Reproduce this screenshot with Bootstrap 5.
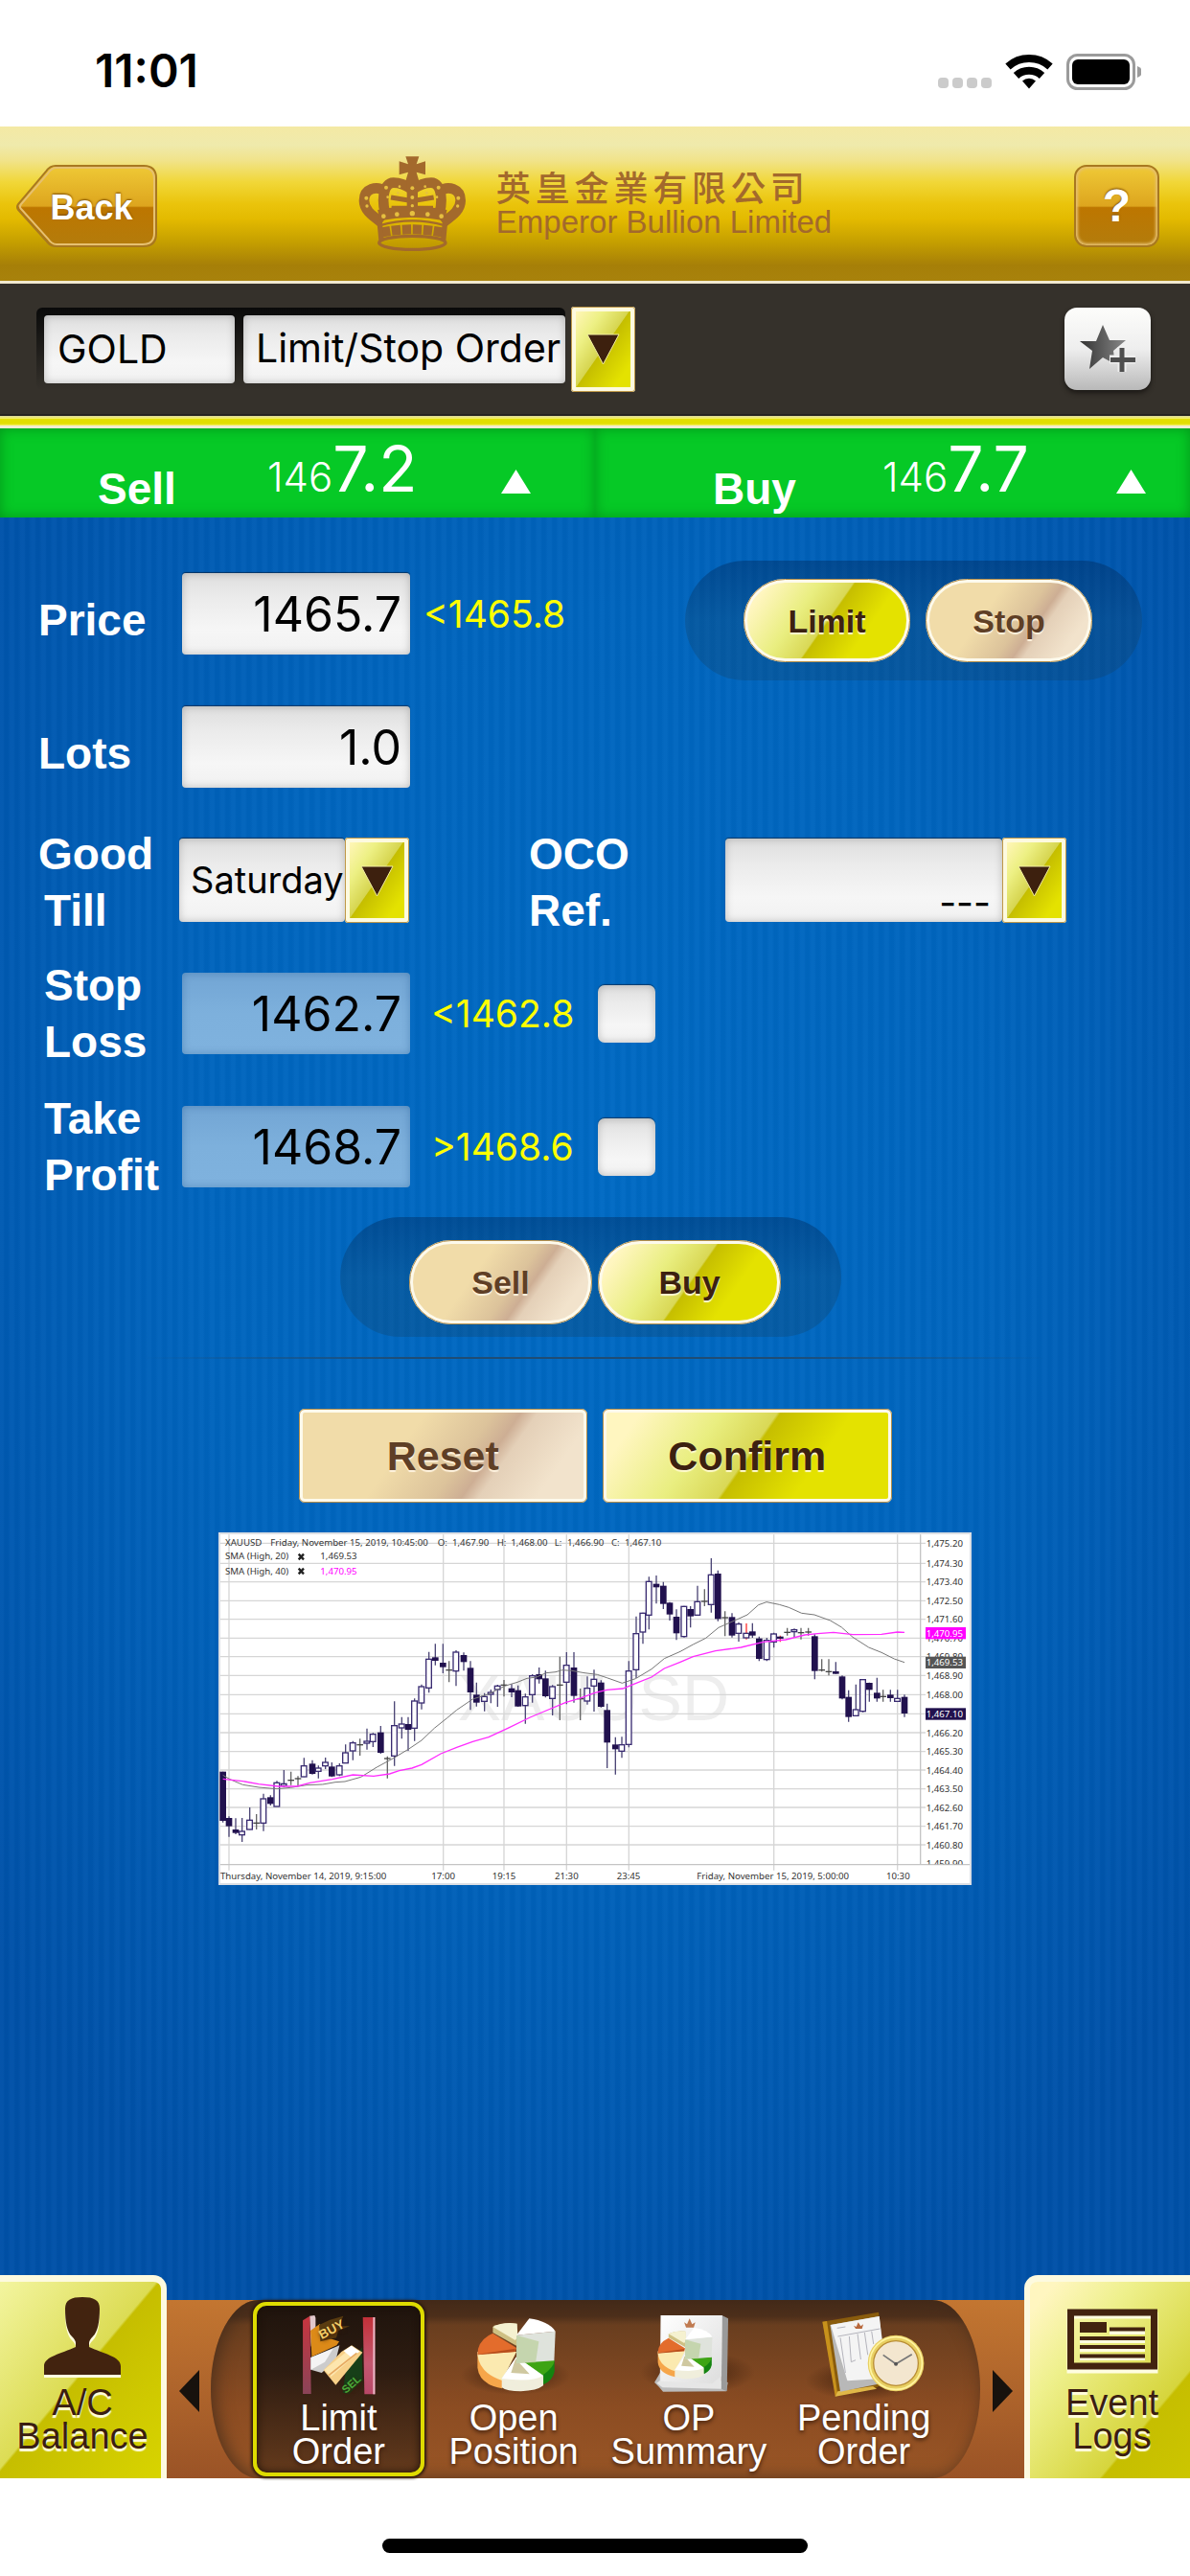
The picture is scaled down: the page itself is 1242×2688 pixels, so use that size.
<!DOCTYPE html>
<html lang="en">
<head>
<meta charset="utf-8">
<meta name="viewport" content="width=device-width, initial-scale=1">
<title>Emperor Bullion Limited - Limit Order</title>
<link href="https://cdn.jsdelivr.net/npm/bootstrap@5.3.0/dist/css/bootstrap.min.css" rel="stylesheet">
<style>
  :root { --arial: "Liberation Sans", Arial, sans-serif; --ui: Inter, "Liberation Sans", sans-serif; }
  body { font-family: var(--ui); background: #fff; color: #000; }
  .screen { min-height: 100vh; }
  svg { display: block; flex: none; }

  .status-bar { height: 132px; padding: 0 51px 0 99px; }
  .clock { font-size: 48px; font-weight: 600; line-height: 56px; margin-top: 46px; }
  .status-icons { margin-top: 54px; }

  .brand-bar { height: 164px; padding: 0 16px; display: grid; grid-template-columns: 1fr auto 1fr; align-items: center;
    background: linear-gradient(#f4e9a4 0, #efeaac 12%, #f1e38a 22%, #f1d738 36%, #eac40c 50%, #e3ba00 60%, #c59f00 75%, #a67f08 90%, #a8820c 100%);
    border-bottom: 3px solid #f2ead0; }
  .gold-btn { border: 0; padding: 0; margin-top: 4px; color: #fff; font-family: var(--arial); font-weight: 700; text-shadow: 0 -1px 2px #7a4a00; }
  .help-btn { width: 89px; height: 86px; margin-right: 16px; font-size: 48px; border: 2px solid #a87820; border-radius: 13px; box-shadow: inset 0 0 3px 2px #e6c070;
    background: linear-gradient(#efc936 0, #dda51e 50%, #bd7600 52%, #b37c0c 100%); }
  .back-btn { width: 149px; height: 88px; font-size: 36px; background: none; }
  .back-label { line-height: 92px; padding-left: 10px; }
  .brand-zh { width: 322px; font-family: "Noto Sans CJK TC", sans-serif; font-size: 36px; line-height: 38px; font-weight: 500; text-align: justify; text-align-last: justify; color: #a3692c; }
  .brand-en { font-family: var(--arial); font-size: 33px; line-height: 38px; color: #a3692c; }

  .product-bar { height: 138px; padding: 0 41px 0 38px; background: #35312b; border-bottom: 2px solid #26231f; }
  .combo { padding: 7px 0 7px 8px; background: linear-gradient(#0a0a0a, #35312b); border-radius: 6px; height: 86px; gap: 9px; }
  .field { border: 0; border-radius: 4px; color: #000; background: linear-gradient(#dedede 0, #ebebeb 30%, #f6f6f6 70%, #f1f1f1 100%);
    box-shadow: inset 0 0 8px rgba(0,0,0,.22), 0 -1px 1px rgba(0,0,0,.45); outline: 0; appearance: none; min-width: 0; }
  .field-product { width: 199px; height: 71px; font-size: 41px; padding: 0 14px; }
  .field-type { width: 336px; height: 71px; font-size: 41px; padding: 0 0 0 13px; }
  .drop-btn { width: 67px; height: 89px; padding: 0; border: 5px solid #fdfadf; outline: 1px solid #c09848; outline-offset: -1px; border-radius: 3px;
    background: linear-gradient(125deg, #fff6b8 0, #edf084 25%, #d6d550 49%, #c5be00 50%, #e4e200 85%); }
  .drop-order { margin-left: 6px; }
  .star-btn { width: 90px; height: 86px; padding: 0; border: 0; border-radius: 13px; background: linear-gradient(#fdfdfb, #eee 50%, #b9b9b9); box-shadow: 0 3px 5px #1b1815; }
  .yellow-rule { height: 13px; background: linear-gradient(#d9d6a0 0, #f4f060 20%, #e2de00 28%, #e2de00 62%, #f4f060 75%, #f2ecd0 80%); }

  .quote { height: 93px; color: #fff; background: #06c926; box-shadow: inset 0 0 14px #03961a; }
  .quote-sell { padding-left: 102px; }
  .quote-buy { padding-left: 123px; }
  .quote-name { width: 177px; margin-top: 36px; font-family: var(--arial); font-weight: 700; font-size: 46px; line-height: 54px; }
  .quote-price { width: 244px; margin-top: 3px; font-weight: 400; font-size: 66px; line-height: 78px; }
  .quote-lead { font-size: 42px; font-weight: 300; }
  .quote-up { margin-top: 43px; }

  .ticket { flex: 1 0 auto; padding-top: 31px; padding-bottom: 60px;
    background: repeating-linear-gradient(90deg, rgba(255,255,255,.02) 0 3px, rgba(0,0,0,.025) 5px 8px, rgba(255,255,255,.02) 11px),
      radial-gradient(ellipse 66% 66% at 50% 38%, #006ac4 0, #0065be 50%, #0051a8 100%); }
  .ticket-row { height: 139px; padding-left: 40px; }
  .name-cell { width: 150px; font-family: var(--arial); font-weight: 700; font-size: 46px; line-height: 59px; color: #fff; }
  .name-single { padding-top: 13px; }
  .name-double { padding-top: 4px; }
  .name-inset { padding-left: 6px; }
  .name-indent { padding-left: 6px; }
  .name-oco { width: 205px; margin-left: 125px; }
  .num-field { width: 238px; height: 85px; font-size: 50px; text-align: right; padding: 0 9px; }
  .num-field:disabled { background: linear-gradient(#72a5d4, #7db0dc 50%, #7fb2de); opacity: 1; color: #000; box-shadow: inset 0 0 8px rgba(0,60,120,.3); }
  .limit-hint { width: 174px; color: #ff0; font-size: 39px; line-height: 46px; }
  .hint-near { margin-left: 14px; }
  .hint-far { margin-left: 22px; }
  .till-field { width: 173px; height: 87px; margin-left: -3px; padding: 0 0 0 12px; font-size: 38px; }
  .oco-field { width: 289px; height: 87px; padding: 38px 12px 0 0; font-size: 39px; text-align: right; text-align-last: right; }
  .tick { width: 60px; height: 60px; border-radius: 7px; }

  .pill-tray { height: 125px; border-radius: 63px; background: linear-gradient(rgba(0,40,90,.42), rgba(20,60,90,.27) 50%); }
  .tray-kind { width: 477px; margin-right: 50px; padding: 19px 52px 19px 61px; gap: 16px; }
  .tray-side { width: 523px; margin: 4px calc(50% - 257px) 0 auto; padding: 24px 63px 13px 72px; gap: 6px; }
  .glossy { flex: 1 1 0; padding: 0; font-family: var(--arial); font-weight: 700; border: 4px solid #fdfaec; outline: 1px solid #b58f4a; outline-offset: -1px; }
  .glossy-on { color: #3c2110; text-shadow: 0 2px 1px #fffbd0; background: linear-gradient(125deg, #fff6c0 10%, #e9ee80 34%, #d9d856 50%, #c6be00 51%, #e4e200 72%); }
  .glossy-off { color: #5f3f26; text-shadow: 0 2px 1px #fff4e0; background: linear-gradient(125deg, #f1dca9 36%, #dcc39b 56%, #cdae94 64%, #e4d0b8 69%, #f2e3cc 86%); }
  .glossy-round { border-radius: 44px; font-size: 34px; line-height: 78px; }
  .glossy-square { border-radius: 6px; font-size: 43px; line-height: 90px; height: 98px; }
  .fade-rule { height: 2px; margin: 21px 148px 52px; background: linear-gradient(90deg, transparent, #1f4c74 30%, #1f4c74 70%, transparent); }
  .action-row { width: 619px; margin: 0 auto 31px; gap: 16px; }
  .chart-box { width: 786px; max-width: 100%; margin: 0 auto; background: #fff; }
  .chart-box text { font-family: "Noto Sans", sans-serif; }

  .dock { margin-top: -26px; position: relative; }
  .dock-card { height: 212px; border: 0; font-family: var(--arial); font-size: 38px; line-height: 35px; text-align: center; text-decoration: none; color: #3a1d12; text-shadow: 0 3px 1px #fffde0; }
  .dock-left { width: 174px; border-top: 7px solid #fdfadf; border-right: 6px solid #fdfadf; border-radius: 0 14px 0 0; padding: 16px 0 0 4px;
    background: linear-gradient(130deg, #f3f5a0 0, #dcdc54 48%, #c6be00 49%, #d8d400 100%); }
  .dock-right { width: 173px; border-top: 7px solid #fdfadf; border-left: 6px solid #fdfadf; border-radius: 14px 0 0 0; padding: 16px 0 0 4px;
    background: linear-gradient(130deg, #fff6c0 8%, #eef08c 32%, #d6d53c 72%, #c6be00 73%, #ccc600 100%); }
  .dock-bar { height: 186px; background: linear-gradient(#c37631, #9a5326); }
  .dock-arrow { width: 46px; border: 0; padding: 0; background: none; }
  .dock-arrow svg { margin: 4px auto 0; }
  .dock-track { padding: 0 30px 0 42px; border-radius: 50px / 93px; background: linear-gradient(#472b19 0, #4d2f1b 9%, #693e1f 14%, #8b4c22 60%, #9a5626 100%); box-shadow: inset 4px 0 18px rgba(60,40,25,.75); }
  .dock-link { flex: 1 1 0; min-width: 0; margin: 2px; border: 4px solid transparent; border-radius: 14px; font-family: var(--arial); font-size: 38px; line-height: 35px; text-align: center; color: #fff; text-decoration: none; text-shadow: 0 2px 4px #3a1d0c; }
  .dock-link svg { width: 100%; margin: -2px 0 0; overflow: visible; }
  .dock-frame { border-color: #dedb00; background: linear-gradient(#1f140d, #2e1c11 40%, #643a1c); box-shadow: inset 0 0 8px #1a0f08, 0 0 3px 2px #2b1a0e; }
  .home-area { height: 102px; padding-top: 63px; }
  .home-line { width: 444px; height: 15px; border-radius: 8px; background: #000; }
</style>
<script src="https://cdn.jsdelivr.net/npm/bootstrap@5.3.0/dist/js/bootstrap.bundle.min.js"></script>
</head>
<body>
<div class="screen d-flex flex-column">

  <div class="status-bar d-flex justify-content-between align-items-start">
    <div class="clock">11:01</div>
    <svg class="status-icons" width="214" height="40" viewBox="0 0 214 40" aria-hidden="true">
      <g fill="#cbcbcb"><rect x="2" y="27" width="11" height="11" rx="4"/><rect x="17" y="27" width="11" height="11" rx="4"/><rect x="32" y="27" width="11" height="11" rx="4"/><rect x="47" y="27" width="11" height="11" rx="4"/></g>
      <g fill="none" stroke="#000" stroke-width="8"><path d="M75 15.500a33 33 0 0 1 44 0"/><path d="M83.500 25a20 20 0 0 1 27 0"/></g>
      <path d="M97 38.500l-7-8a10 10 0 0 1 14 0z"/>
      <rect x="137.500" y="3.500" width="69" height="35" rx="10" fill="#fff" stroke="#9b9b9b" stroke-width="3"/>
      <rect x="142" y="8" width="60" height="26" rx="6"/><path d="M210 15q5 2 5 6t-5 6z" fill="#9b9b9b"/>
    </svg>
  </div>

  <header class="brand-bar">
    <button type="button" class="gold-btn back-btn position-relative">
      <svg class="position-absolute top-0 start-0" width="149" height="88" viewBox="0 0 149 88" aria-hidden="true">
        <defs><linearGradient id="amber" x2="0" y2="1"><stop stop-color="#efc936"/><stop offset=".5" stop-color="#dda51e"/><stop offset=".52" stop-color="#bd7600"/><stop offset="1" stop-color="#b37c0c"/></linearGradient></defs>
        <path d="M42 2h92q13 0 13 13v58q0 13-13 13H42q-6 0-10-6L3 48q-2-3 0-6L32 8q4-6 10-6z" fill="url(#amber)" stroke="#a87820" stroke-width="2"/>
        <path d="M43 4h90q12 0 12 12v56q0 12-12 12H43q-5 0-9-6L6 47q-2-2 0-5L34 10q4-6 9-6z" fill="none" stroke="#e6c070" stroke-width="2"/>
      </svg>
      <span class="back-label position-relative">Back</span>
    </button>
    <div class="d-flex align-items-center">
      <svg width="112" height="100" viewBox="26 28 336 298" aria-hidden="true">
        <g fill="none" stroke="#a3692c">
          <path d="M100 236C68 212 44 196 44 166c0-38 40-48 64-30" stroke-width="32"/>
          <path d="M290 236c32-24 56-40 56-70 0-38-40-48-64-30" stroke-width="32"/>
          <path d="M116 222c-20-50-14-112 20-112 26 0 40 8 56 20" stroke-width="32"/>
          <path d="M274 222c20-50 14-112-20-112-26 0-40 8-56 20" stroke-width="32"/>
          <path d="M195 100v118" stroke-width="34"/>
          <path d="M90 212q105-22 210 0" stroke-width="34"/>
          <path d="M92 244q103-30 206 0" stroke-width="7"/>
          <path d="M98 266q97-20 194 0" stroke-width="30" stroke-dasharray="28 5"/>
          <ellipse cx="195" cy="298" rx="104" ry="21" stroke-width="10"/>
          <path d="M92 228l6 62M298 228l-6 62" stroke-width="16"/>
          <path d="M128 156q34 6 60 10M262 156q-34 6-60 10M130 190h130" stroke-width="15"/>
        </g>
        <path d="M174 28h42l-8 24 28-9v42l-28-8 8 28h-42l8-28-28 8V43l28 9z" fill="#a3692c"/>
        <g fill="#e6c040"><circle cx="195" cy="127" r="6"/><circle cx="195" cy="156" r="6"/><circle cx="195" cy="182" r="5"/><circle cx="195" cy="206" r="8"/><circle cx="147" cy="209" r="7"/><circle cx="243" cy="209" r="7"/><circle cx="105" cy="215" r="7"/><circle cx="286" cy="215" r="7"/><circle cx="51" cy="158" r="6"/><circle cx="339" cy="158" r="6"/><circle cx="53" cy="183" r="5"/><circle cx="337" cy="183" r="5"/><circle cx="113" cy="125" r="6"/><circle cx="277" cy="125" r="6"/><circle cx="118" cy="155" r="4"/><circle cx="272" cy="155" r="4"/><circle cx="150" cy="142" r="4"/><circle cx="240" cy="142" r="4"/><circle cx="155" cy="122" r="4"/><circle cx="235" cy="122" r="4"/></g>
      </svg>
      <div class="ms-4 ps-2">
        <div class="brand-zh" lang="zh-Hant">英皇金業有限公司</div>
        <div class="brand-en">Emperor Bullion Limited</div>
      </div>
    </div>
    <button type="button" class="gold-btn help-btn ms-auto" aria-label="Help">?</button>
  </header>

  <div class="product-bar d-flex justify-content-between align-items-center">
    <div class="d-flex align-items-center">
      <div class="combo d-flex align-items-center">
        <input class="field field-product" type="text" value="GOLD" aria-label="Product">
        <select class="field field-type" aria-label="Order type"><option>Limit/Stop Order</option></select>
      </div>
      <button type="button" class="drop-btn drop-order" aria-label="Choose order type"><svg class="mx-auto" width="35" height="34" viewBox="0 0 35 34"><path d="M1 2h33L17.500 33z" fill="#3d200e" stroke="#f2eea0" stroke-width="1"/></svg></button>
    </div>
    <button type="button" class="star-btn" aria-label="Add to favourites">
      <svg class="mx-auto" width="62" height="52" viewBox="0 0 62 52"><defs><linearGradient id="steel" x2="1" y2="0"><stop stop-color="#333"/><stop offset="1" stop-color="#888"/></linearGradient></defs>
        <path d="M26 1l7 16h17L37 28l1 8-3 4-9-5-14 12 3-19L2 18h17z" fill="url(#steel)"/><path d="M46 24v26M33 37h27" stroke="#eee" stroke-width="9"/><path d="M46 25v25M34 37.500h26" stroke="#4e4e4e" stroke-width="5"/></svg>
    </button>
  </div>
  <div class="yellow-rule"></div>

  <div class="row g-0">
    <div class="col-6 quote quote-sell d-flex align-items-start">
      <div class="quote-name">Sell</div>
      <div class="quote-price"><span class="quote-lead">146</span>7.2</div>
      <svg class="quote-up" width="31" height="25" viewBox="0 0 31 25" aria-label="up"><path d="M15.500 0L31 25H0z" fill="#fff"/></svg>
    </div>
    <div class="col-6 quote quote-buy d-flex align-items-start">
      <div class="quote-name">Buy</div>
      <div class="quote-price"><span class="quote-lead">146</span>7.7</div>
      <svg class="quote-up" width="31" height="25" viewBox="0 0 31 25" aria-label="up"><path d="M15.500 0L31 25H0z" fill="#fff"/></svg>
    </div>
  </div>

  <main class="ticket">
    <div class="ticket-row d-flex align-items-center">
      <label class="name-cell name-single" for="price">Price</label>
      <input class="field num-field" id="price" type="text" value="1465.7">
      <span class="limit-hint hint-near">&lt;1465.8</span>
      <div class="pill-tray tray-kind d-flex ms-auto align-self-end">
        <button type="button" class="glossy glossy-round glossy-on">Limit</button>
        <button type="button" class="glossy glossy-round glossy-off">Stop</button>
      </div>
    </div>
    <div class="ticket-row d-flex align-items-center">
      <label class="name-cell name-single" for="lots">Lots</label>
      <input class="field num-field" id="lots" type="text" value="1.0">
    </div>
    <div class="ticket-row d-flex align-items-center">
      <label class="name-cell name-double" for="till">Good<br><span class="name-indent">Till</span></label>
      <select class="field till-field" id="till"><option>Saturday</option></select>
      <button type="button" class="drop-btn" aria-label="Choose good till"><svg class="mx-auto" width="35" height="34" viewBox="0 0 35 34"><path d="M1 2h33L17.500 33z" fill="#3d200e" stroke="#f2eea0" stroke-width="1"/></svg></button>
      <label class="name-cell name-double name-oco" for="oco">OCO<br>Ref.</label>
      <select class="field oco-field" id="oco"><option>---</option></select>
      <button type="button" class="drop-btn" aria-label="Choose OCO reference"><svg class="mx-auto" width="35" height="34" viewBox="0 0 35 34"><path d="M1 2h33L17.500 33z" fill="#3d200e" stroke="#f2eea0" stroke-width="1"/></svg></button>
    </div>
    <div class="ticket-row d-flex align-items-center">
      <label class="name-cell name-inset" for="stoploss">Stop<br>Loss</label>
      <input class="field num-field" id="stoploss" type="text" value="1462.7" disabled>
      <span class="limit-hint hint-far">&lt;1462.8</span>
      <input class="field tick" type="checkbox" aria-label="Use stop loss">
    </div>
    <div class="ticket-row d-flex align-items-center">
      <label class="name-cell name-inset" for="takeprofit">Take<br>Profit</label>
      <input class="field num-field" id="takeprofit" type="text" value="1468.7" disabled>
      <span class="limit-hint hint-far">&gt;1468.6</span>
      <input class="field tick" type="checkbox" aria-label="Use take profit">
    </div>

    <div class="pill-tray tray-side d-flex">
      <button type="button" class="glossy glossy-round glossy-off">Sell</button>
      <button type="button" class="glossy glossy-round glossy-on">Buy</button>
    </div>
    <div class="fade-rule"></div>
    <div class="action-row d-flex">
      <button type="button" class="glossy glossy-square glossy-off">Reset</button>
      <button type="button" class="glossy glossy-square glossy-on">Confirm</button>
    </div>

    <div class="chart-box">
      <svg id="chart" class="w-100" viewBox="24 27 2358 1104" role="img" aria-label="XAUUSD candle chart"></svg>
    </div>
  </main>

  <nav class="dock d-flex align-items-end">
    <a href="#" class="dock-card dock-left">
      <svg class="mx-auto" width="80" height="93" viewBox="0 0 80 93" aria-hidden="true">
        <path d="M40 4c12 0 18 3 18 12 0 14-2 24-7 29-3 3-4 5-4 7l2 3c15 7 31 9 31 20v9H0v-9c0-11 16-13 31-20l2-3c0-2-1-4-4-7-5-5-7-15-7-29C22 7 28 4 40 4z" fill="#fffde0"/>
        <path d="M40 0c12 0 18 3 18 12 0 14-2 24-7 29-3 3-4 5-4 7v4c15 7 33 10 33 20v9H0v-9c0-10 18-13 33-20v-4c0-2-1-4-4-7-5-5-7-15-7-29C22 3 28 0 40 0z" fill="#42230f"/>
      </svg>
      A/C<br>Balance
    </a>
    <div class="dock-bar flex-fill d-flex">
      <button type="button" class="dock-arrow" aria-label="Previous"><svg width="21" height="44" viewBox="0 0 21 44"><path d="M21 0v44L0 22z" fill="#17120d"/></svg></button>
      <div class="dock-track flex-fill d-flex">
        <a href="#" class="dock-link dock-frame">
          <svg width="120" height="102" viewBox="9 0 360 306" aria-hidden="true">
            <defs><linearGradient id="post" x2="0" y2="1"><stop stop-color="#c8353f"/><stop offset="1" stop-color="#8a4458"/></linearGradient>
            <linearGradient id="post2" x2="0" y2="1"><stop stop-color="#c23038"/><stop offset=".6" stop-color="#c45870"/><stop offset="1" stop-color="#b84868"/></linearGradient></defs>
            <path d="M98 38l16-2 3 8v60l-14 30z" fill="#e2c8cc"/>
            <path d="M77 52l22-14 4 244H77z" fill="url(#post)"/>
            <path d="M265 42h38v241h-33z" fill="url(#post2)"/><path d="M297 42h6v241h-6z" fill="#eab8c6"/>
            <path d="M101 84l30-22 4 38 56 18-8 12-78 36z" fill="#dc8a18"/>
            <path d="M128 66l34-16 42-12-14 32 34 0-36 14-6 22-50 12z" fill="#5a3c10"/>
            <text x="136" y="112" transform="rotate(-28 136 112)" font-weight="700" font-size="40" fill="#f4cc66" style="font-family:'Liberation Sans',sans-serif">BUY</text>
            <path d="M102 168l90-38-12 48-44 38-34-10z" fill="#ccc"/><path d="M102 168l70-28-26 42-44 24z" fill="#f4f4f4"/>
            <path d="M262 136l2 104-42 42-20-4 8-60z" fill="#173f18"/>
            <path d="M198 150l32-20 34 22-84 102-38-46z" fill="#f7d088"/><path d="M144 206l82-66 20 16-80 72z" fill="#fde6ae"/><path d="M205 148l24-17 26 18-26 18z" fill="#fff"/><path d="M158 224l88-70" stroke="#e6a860" stroke-width="5"/>
            <text x="212" y="282" transform="rotate(-42 212 282)" font-weight="700" font-size="34" fill="#4aa838" style="font-family:'Liberation Sans',sans-serif">SEL</text>
          </svg>
          Limit<br>Order
        </a>
        <a href="#" class="dock-link">
          <svg width="120" height="102" viewBox="555 0 360 306" aria-hidden="true">
            <defs><radialGradient id="shade"><stop stop-color="#2b1408" stop-opacity=".75"/><stop offset="1" stop-color="#2b1408" stop-opacity="0"/></radialGradient>
            <linearGradient id="white" x2="1" y2="1"><stop stop-color="#fff"/><stop offset="1" stop-color="#ddd"/></linearGradient></defs>
            <ellipse cx="740" cy="225" rx="172" ry="60" fill="url(#shade)"/>
            <g id="pie">
              <path d="M621 154v46q6 52 77 65l6-80z" fill="#f6a64a"/>
              <path d="M621 150l122 0-45 90q-70-22-77-80z" fill="#fbeab0"/>
              <path d="M621 158q0-44 48-66l74 46-4 12z" fill="#e36c2c"/><path d="M621 158l118-18v10l-118 10z" fill="#b84e1c"/>
              <path d="M669 90V72q30-14 75-10v70z" fill="#cfc083"/><path d="M669 72q30-16 76-10l2 42-8 10z" fill="#f5f1d0"/>
              <path d="M764 184l98-6v34q-6 28-34 40z" fill="#148410"/><path d="M764 184l98-7q-2 22-36 46z" fill="#3ea414"/>
              <path d="M743 166l84 60v30q-20 16-70 18-45 0-60-12v-30z" fill="#f0eedc"/><path d="M743 166l84 58q-30 22-130 10z" fill="#fff"/><path d="M740 172l44 48-58-4z" fill="#cfc8a0"/>
              <path d="M743 98l122-12-4 92-118 8z" fill="#dfe3dc"/><path d="M743 98l70 20-10 66-60 2z" fill="#b4cc90" opacity=".6"/>
              <path d="M743 98l40-52q60 8 82 40z" fill="#fff"/>
            </g>
          </svg>
          Open<br>Position
        </a>
        <a href="#" class="dock-link">
          <svg width="120" height="102" viewBox="-6 0 360 306" aria-hidden="true">
            <ellipse cx="200" cy="215" rx="180" ry="66" fill="url(#shade)"/>
            <path d="M65 246l26-44 204 44-5 28-198 1-12-14z" fill="#bbb"/><path d="M276 36l20 10-4 228-18-8z" fill="#9a9a9a"/>
            <path d="M85 36h192l-3 230-184-4-18-14 10-8z" fill="#e6e6e6"/><path d="M85 36h192l-2 190-30 24-160-8z" fill="url(#white)"/>
            <path d="M158 58l9 6 8-18 8 18 10-6-5 16h-24z" fill="#c07a50"/>
            <g transform="translate(-359 43) scale(.7)"><use href="#pie"/></g>
          </svg>
          OP<br>Summary
        </a>
        <a href="#" class="dock-link">
          <svg width="120" height="102" viewBox="543 0 360 306" aria-hidden="true">
            <ellipse cx="720" cy="240" rx="180" ry="62" fill="url(#shade)"/>
            <path d="M594 56l176-30 24 220-30 16-128 28z" fill="#8a5c0c"/><path d="M594 56l14-2 34 232-8 4z" fill="#c8921c"/><path d="M634 290l8-16 110-16 12 8z" fill="#e0b848"/>
            <path d="M618 66l154-27 26 206-148 30z" fill="#b8b8b8"/><path d="M620 66l152-27 22 194-122 8z" fill="#f4f4f4"/>
            <g stroke="#b4b4bc" stroke-width="3" fill="none"><path d="M642 102l132-24M650 106l16 110M678 102l6 80 14-6M704 94l10 80M726 90l10 70M748 86l6 40M640 76l26-4"/></g>
            <path d="M692 68l8 4 6-14 8 12 8-6-4 14h-20z" fill="#b8683c"/>
            <circle cx="824" cy="186" r="88" fill="#e8cf62"/><circle cx="824" cy="186" r="82" fill="none" stroke="#fff4a0" stroke-width="5"/><circle cx="824" cy="186" r="70" fill="#f3e6cf" stroke="#b98d34" stroke-width="4"/>
            <path d="M784 160l40 28 50-30" fill="none" stroke="#777" stroke-width="5"/><circle cx="824" cy="188" r="6" fill="#555"/>
          </svg>
          Pending<br>Order
        </a>
      </div>
      <button type="button" class="dock-arrow" aria-label="Next"><svg width="21" height="44" viewBox="0 0 21 44"><path d="M0 0v44l21-22z" fill="#17120d"/></svg></button>
    </div>
    <a href="#" class="dock-card dock-right">
      <svg class="mx-auto" width="96" height="93" viewBox="0 0 96 93" aria-hidden="true">
        <path d="M4 19h88v57H4z" fill="none" stroke="#fffde0" stroke-width="7"/>
        <path d="M4.500 16h87v56h-87z" fill="none" stroke="#42230f" stroke-width="7"/>
        <path d="M14 26h28v11H14z" fill="#42230f"/>
        <path d="M45 37h37M14 46h68M14 55h68M14 64h68" stroke="#fffde0" stroke-width="4"/>
        <path d="M45 33.500h37M14 43h68M14 52h68M14 61.500h68" stroke="#42230f" stroke-width="4"/>
      </svg>
      Event<br>Logs
    </a>
  </nav>
  <div class="home-area"><div class="home-line mx-auto"></div></div>
</div>

<script>
  // Each candle: x, high, low, body top, body bottom, kind (f falling, h rising, d flat, trailing r red wick)
  const candles = [
    [38,776,935,776,930,'f'],[57,916,980,921,947,'f'],[78,922,972,957,968,'f'],[98,921,996,963,974,'h'],[122,888,958,928,957,'h'],[143,909,957,937,937,'d'],
    [165,845,962,861,937,'h'],[187,850,882,856,877,'f'],[207,805,885,811,885,'h'],[229,771,824,814,820,'h'],[251,776,818,803,803,'d'],[273,790,822,798,798,'d'],
    [292,733,793,758,792,'h'],[318,740,785,751,783,'f'],[337,757,797,765,775,'h'],[359,732,768,747,758,'h'],[379,747,793,760,791,'f'],[403,750,790,758,786,'h'],
    [422,691,750,717,749,'h'],[445,680,740,686,711,'h'],[467,673,726,692,692,'d'],[489,641,707,681,687,'h'],[508,655,699,659,682,'h'],[532,633,720,653,717,'f'],
    [553,728,797,735,735,'d'],[575,556,758,632,727,'h'],[598,605,673,627,639,'h'],[618,605,711,627,645,'f'],[638,547,680,555,640,'h'],[660,503,581,510,561,'h'],
    [683,401,529,424,514,'h'],[703,376,443,418,429,'f'],[727,376,468,435,449,'f'],[746,430,496,458,458,'d'],[768,396,508,402,461,'h'],[792,403,460,411,433,'f'],
    [813,430,583,451,528,'f'],[832,497,572,535,560,'f'],[857,530,587,541,556,'h'],[877,519,562,528,534,'h'],[898,504,573,508,519,'h'],[918,489,541,505,505,'d'],
    [942,502,543,515,528,'f'],[962,506,573,521,572,'f'],[985,532,626,542,569,'h'],[1007,471,560,476,535,'h'],[1028,450,500,471,487,'f'],[1048,460,544,484,540,'f'],
    [1070,505,600,510,547,'h'],[1093,416,615,505,505,'d'],[1114,402,565,443,496,'h'],[1137,402,560,450,539,'f'],[1157,516,615,548,548,'d'],[1179,478,566,515,555,'h'],
    [1200,457,588,487,508,'h'],[1222,490,575,497,573,'f'],[1241,563,765,583,685,'f'],[1267,668,785,691,706,'f'],[1287,667,733,692,712,'h'],[1309,430,700,461,691,'h'],
    [1332,290,483,344,457,'h'],[1353,278,376,280,339,'h'],[1372,166,331,181,286,'h'],[1395,162,250,188,199,'f'],[1417,182,267,194,251,'f'],[1437,245,303,247,284,'f'],
    [1458,268,364,291,343,'f'],[1482,257,356,259,353,'h'],[1502,258,325,267,290,'f'],[1524,194,288,244,286,'h'],[1546,205,258,243,243,'d'],[1567,108,278,160,253,'h'],
    [1588,146,305,156,298,'f'],[1610,274,352,294,294,'d'],[1632,280,356,292,350,'f'],[1653,308,369,314,343,'h'],[1677,312,362,343,357,'hr'],[1696,311,357,337,350,'f'],
    [1717,353,430,359,423,'f'],[1741,357,430,365,425,'h'],[1763,341,388,345,370,'h'],[1783,350,370,353,360,'fr'],[1805,326,350,340,340,'d'],[1827,328,357,332,338,'h'],
    [1848,326,362,341,341,'d'],[1871,326,350,339,339,'d'],[1891,346,487,352,461,'f'],[1913,424,463,458,458,'d'],[1935,424,475,463,463,'d'],[1957,433,470,462,470,'f'],
    [1977,475,550,478,547,'f'],[1997,521,620,542,605,'f'],[2020,503,602,582,601,'h'],[2042,486,590,488,587,'h'],[2062,497,557,498,520,'f'],[2086,482,557,529,547,'f'],
    [2105,520,557,541,541,'d'],[2128,520,557,535,546,'f'],[2150,520,557,547,556,'h'],[2172,535,605,542,594,'f']
  ];
  const sma20 = '38,787 60,800 100,817 150,825 207,830 250,826 300,818 350,816 390,809 420,807 470,793 520,762 570,735 620,705 660,678 700,640 740,608 770,583 820,549 870,533 920,508 960,496 990,484 1020,480 1050,467 1080,464 1100,458 1130,460 1170,467 1210,472 1240,482 1288,499 1330,485 1380,455 1420,422 1470,400 1510,378 1550,358 1590,325 1640,303 1680,285 1715,254 1740,245 1780,253 1810,262 1850,280 1890,285 1940,303 1975,324 2010,355 2060,387 2100,403 2140,423 2172,434';
  const sma40 = '38,799 100,806 150,815 210,822 270,822 310,811 380,800 445,786 510,790 560,783 590,773 630,765 660,754 720,720 770,700 820,682 870,668 930,640 1000,606 1050,585 1110,560 1160,545 1200,530 1240,520 1290,516 1330,500 1380,480 1420,453 1470,433 1510,416 1580,398 1660,387 1730,370 1800,363 1860,348 1900,344 1950,340 2010,347 2100,346 2150,339 2172,340';
  const levels = [[61,'1,475.20'],[124,'1,474.30'],[182,'1,473.40'],[241,'1,472.50'],[299,'1,471.60'],[358,'1,470.70'],[416,'1,469.80'],[475,'1,468.90'],[535,'1,468.00'],[595,''],[654,'1,466.20'],[713,'1,465.30'],[771,'1,464.40'],[830,'1,463.50'],[888,'1,462.60'],[947,'1,461.70'],[1005,'1,460.80']];
  const label = (x, y, s, fill = '#333', anchor = 'start') => `<text x="${x}" y="${y}" font-size="29" fill="${fill}" text-anchor="${anchor}">${s}</text>`;
  let out = '<rect x="27" y="30" width="2352" height="1098" fill="#fff" stroke="#dcdfe4" stroke-width="6"/>';
  out += '<text x="1198" y="615" font-size="204" text-anchor="middle" fill="#eee" style="font-family:\'Liberation Sans\',sans-serif">XAUUSD</text>';
  for (const [y, s] of levels) out += `<path d="M30 ${y}H2238" stroke="#d6d6d6" stroke-width="4"/>` + label(2240, y + 11, s);
  for (const x of [57, 728, 918, 1114, 1309, 1763, 2150]) out += `<path d="M${x} 34V1085" stroke="#d6d6d6" stroke-width="4"/>`;
  out += '<path d="M30 1067H2376M2222 34V1067" stroke="#c4c4c4" stroke-width="4"/>';
  out += '<svg x="2230" y="1040" width="146" height="26" viewBox="2230 1040 146 26">' + label(2240, 1074, '1,459.90') + '</svg>';
  for (const [x, hi, lo, top, bot, kind] of candles) {
    const ink = kind.endsWith('r') ? '#f33' : kind === 'd' ? '#666' : '#4c4676';
    out += `<path d="M${x} ${hi}V${lo}" stroke="${ink}" stroke-width="4"/>`;
    if (kind === 'd') out += `<path d="M${x - 10} ${top}h20" stroke="#444" stroke-width="4"/>`;
    else if (kind[0] === 'f') out += `<rect x="${x - 10}" y="${top}" width="20" height="${bot - top}" fill="#21114e"/>`;
    else out += `<rect x="${x - 9}" y="${top}" width="17" height="${bot - top}" fill="#fff" stroke="#3a2c72" stroke-width="4"/>`;
  }
  out += `<polyline points="${sma20}" fill="none" stroke="#777" stroke-width="3"/><polyline points="${sma40}" fill="none" stroke="#ff2cff" stroke-width="4"/>`;
  for (const [y, s, c] of [[342, '1,470.95', '#f0f'], [434, '1,469.53', '#555'], [595, '1,467.10', '#21114e']])
    out += `<rect x="2238" y="${y - 18}" width="126" height="37" fill="${c}"/>` + label(2240, y + 11, s, '#fff');
  out += label(45, 68, 'XAUUSD') + label(187, 68, 'Friday, November 15, 2019, 10:45:00') + label(710, 68, 'O:') + label(756, 68, '1,467.90') + label(896, 68, 'H:') + label(940, 68, '1,468.00') + label(1076, 68, 'L:') + label(1116, 68, '1,466.90') + label(1254, 68, 'C:') + label(1296, 68, '1,467.10');
  out += label(45, 112, 'SMA (High, 20)') + label(343, 112, '1,469.53') + label(45, 158, 'SMA (High, 40)') + label(343, 158, '1,470.95', '#f0f');
  for (const y of [103, 148]) out += `<path d="M275 ${y - 8}l16 17m0-17l-16 17" stroke="#222" stroke-width="7"/>`;
  out += label(30, 1112, 'Thursday, November 14, 2019, 9:15:00');
  for (const [x, s] of [[728, '17:00'], [918, '19:15'], [1114, '21:30'], [1308, '23:45'], [1760, 'Friday, November 15, 2019, 5:00:00'], [2152, '10:30']]) out += label(x, 1112, s, '#333', 'middle');
  document.getElementById('chart').innerHTML = out;
</script>
</body>
</html>
